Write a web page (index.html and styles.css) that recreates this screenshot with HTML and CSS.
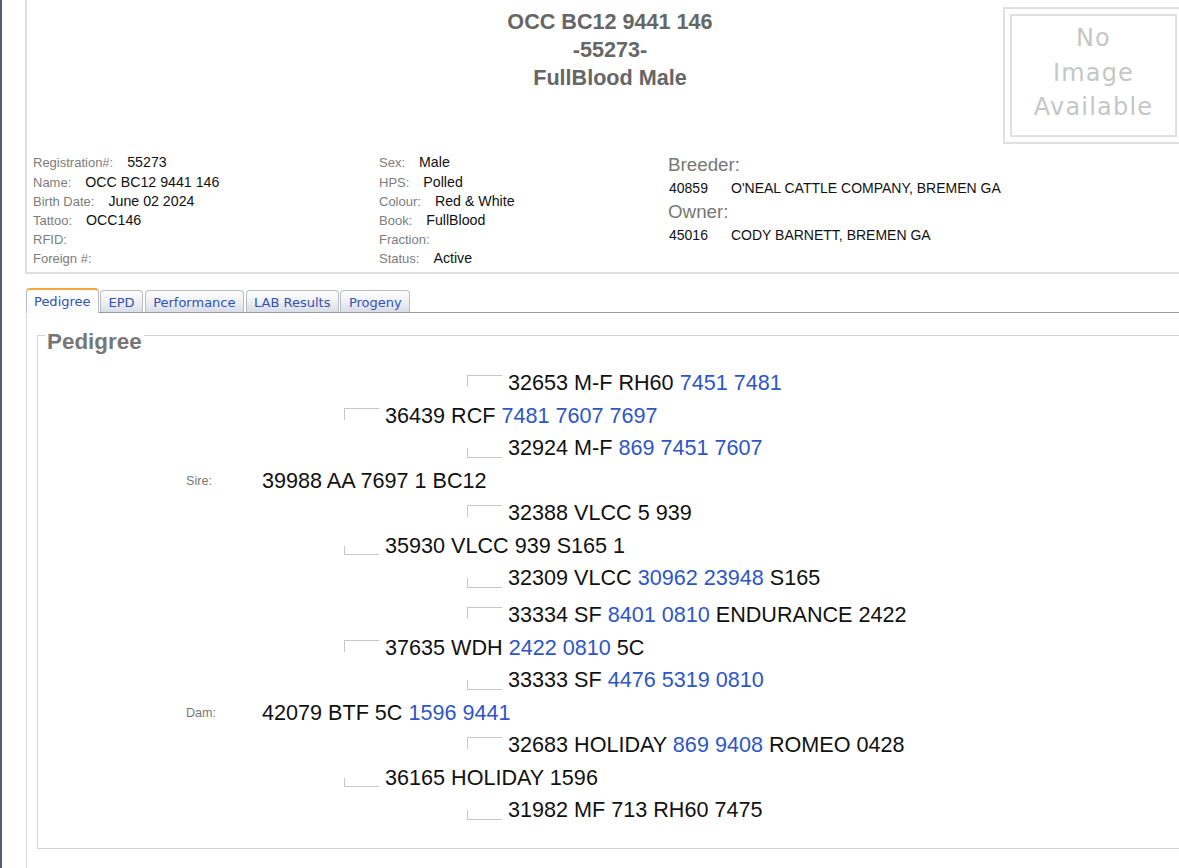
FILE: index.html
```html
<!DOCTYPE html>
<html lang="en">
<head>
<meta charset="utf-8">
<title>OCC BC12 9441 146</title>
<link rel="stylesheet" href="styles.css">
</head>
<body>
<div class="page">
  <section class="record">
    <div class="record-head">
      <div class="head-side"></div>
      <h1 class="title">OCC BC12 9441 146<br>-55273-<br>FullBlood Male</h1>
      <div class="photo"><div class="photo-inner">No<br>Image<br>Available</div></div>
    </div>
    <div class="details">
      <dl class="col">
        <div class="field"><dt>Registration#:</dt><dd>55273</dd></div>
        <div class="field"><dt>Name:</dt><dd>OCC BC12 9441 146</dd></div>
        <div class="field"><dt>Birth Date:</dt><dd>June 02 2024</dd></div>
        <div class="field"><dt>Tattoo:</dt><dd>OCC146</dd></div>
        <div class="field"><dt>RFID:</dt><dd></dd></div>
        <div class="field"><dt>Foreign #:</dt><dd></dd></div>
      </dl>
      <dl class="col">
        <div class="field"><dt>Sex:</dt><dd>Male</dd></div>
        <div class="field"><dt>HPS:</dt><dd>Polled</dd></div>
        <div class="field"><dt>Colour:</dt><dd>Red &amp; White</dd></div>
        <div class="field"><dt>Book:</dt><dd>FullBlood</dd></div>
        <div class="field"><dt>Fraction:</dt><dd></dd></div>
        <div class="field"><dt>Status:</dt><dd>Active</dd></div>
      </dl>
      <div class="col parties">
        <div class="party-head">Breeder:</div>
        <div class="party"><span class="party-id">40859</span><span>O'NEAL CATTLE COMPANY, BREMEN GA</span></div>
        <div class="party-head">Owner:</div>
        <div class="party"><span class="party-id">45016</span><span>CODY BARNETT, BREMEN GA</span></div>
      </div>
    </div>
  </section>

  <nav class="tabs">
    <a class="tab active">Pedigree</a>
    <a class="tab">EPD</a>
    <a class="tab">Performance</a>
    <a class="tab">LAB Results</a>
    <a class="tab">Progeny</a>
  </nav>

  <div class="panel">
    <fieldset class="pedigree">
      <legend>Pedigree</legend>
      <div class="tree">
        <div class="node g3"><span class="branch up"></span><span class="name">32653 M-F RH60 <a>7451</a> <a>7481</a></span></div>
        <div class="node g2"><span class="branch up"></span><span class="name">36439 RCF <a>7481</a> <a>7607</a> <a>7697</a></span></div>
        <div class="node g3"><span class="branch down"></span><span class="name">32924 M-F <a>869</a> <a>7451</a> <a>7607</a></span></div>
        <div class="node g1"><span class="role">Sire:</span><span class="name">39988 AA 7697 1 BC12</span></div>
        <div class="node g3"><span class="branch up"></span><span class="name">32388 VLCC 5 939</span></div>
        <div class="node g2"><span class="branch down"></span><span class="name">35930 VLCC 939 S165 1</span></div>
        <div class="node g3"><span class="branch down"></span><span class="name">32309 VLCC <a>30962</a> <a>23948</a> S165</span></div>

        <div class="node g3 dam-start"><span class="branch up"></span><span class="name">33334 SF <a>8401</a> <a>0810</a> ENDURANCE 2422</span></div>
        <div class="node g2"><span class="branch up"></span><span class="name">37635 WDH <a>2422</a> <a>0810</a> 5C</span></div>
        <div class="node g3"><span class="branch down"></span><span class="name">33333 SF <a>4476</a> <a>5319</a> <a>0810</a></span></div>
        <div class="node g1"><span class="role">Dam:</span><span class="name">42079 BTF 5C <a>1596</a> <a>9441</a></span></div>
        <div class="node g3"><span class="branch up"></span><span class="name">32683 HOLIDAY <a>869</a> <a>9408</a> ROMEO 0428</span></div>
        <div class="node g2"><span class="branch down"></span><span class="name">36165 HOLIDAY 1596</span></div>
        <div class="node g3"><span class="branch down"></span><span class="name">31982 MF 713 RH60 7475</span></div>
      </div>
    </fieldset>
  </div>
</div>
</body>
</html>
```

FILE: styles.css
```css
html, body {
  margin: 0;
  padding: 0;
  overflow-x: hidden;
  background: #fff;
}

body {
  font-family: "Liberation Sans", Arial, sans-serif;
  color: #111;
  border-left: 2px solid #535d78;
  min-height: 868px;
  box-sizing: border-box;
}

.page {
  padding-left: 23px;
}

/* ---------- record summary box ---------- */
.record {
  margin-right: -14px;
  border-left: 2px solid #dedede;
  border-bottom: 2px solid #dedede;
}

.record-head {
  display: grid;
  grid-template-columns: 1fr auto 1fr;
  align-items: start;
}

.title {
  margin: 0;
  padding-top: 8px;
  font-size: 21.6px;
  line-height: 28px;
  font-weight: bold;
  color: #666;
  text-align: center;
}

.photo {
  justify-self: end;
  margin: 7px 9px 0 0;
  width: 181px;
  height: 137px;
  box-sizing: border-box;
  border: 2px solid #e0e0e0;
  padding: 5px;
}

.photo-inner {
  height: 100%;
  box-sizing: border-box;
  border: 2px solid #e0e0e0;
  padding-top: 5px;
  font-family: "DejaVu Sans", Verdana, sans-serif;
  font-size: 24px;
  letter-spacing: 1.2px;
  line-height: 34.5px;
  color: #c6c6c6;
  text-align: center;
}

.details {
  display: grid;
  grid-template-columns: 346px 289px 1fr;
  padding: 9.4px 0 3.4px 6px;
}

.col {
  margin: 0;
}

.field {
  display: flex;
  align-items: baseline;
  height: 19.2px;
  line-height: 19.2px;
}

.field dt {
  font-size: 13px;
  color: #7c7c7c;
  margin-right: 14px;
}

.field dd {
  margin: 0;
  font-size: 14.2px;
  color: #111;
}

.party-head {
  font-size: 18.8px;
  line-height: 23.5px;
  color: #777;
}

.party {
  display: flex;
  font-size: 14px;
  line-height: 23.5px;
  padding-left: 1px;
}

.party-id {
  width: 62px;
}

/* ---------- tab strip ---------- */
.tabs {
  display: flex;
  align-items: flex-end;
  margin: 14px -20px 0 1px;
  border-bottom: 1px solid #9c9c9c;
  height: 24px;
}

.tab {
  font-family: "DejaVu Sans", Verdana, sans-serif;
  font-size: 13px;
  color: #2f52b4;
  height: 22px;
  line-height: 23px;
  padding: 0 7.5px;
  margin-left: 1.5px;
  box-sizing: border-box;
  border: 1px solid #b9bcc4;
  border-bottom: none;
  border-radius: 4px 4px 0 0;
  background: linear-gradient(#fefefe, #f1f2f6 45%, #d9dde9);
}

.tab.active {
  margin-left: 0;
  padding: 0 7px;
  height: 25px;
  margin-bottom: -1px;
  line-height: 24px;
  border-top: 2px solid #f2a93b;
  background: linear-gradient(#fff, #fbfbfb);
}

/* ---------- tab panel ---------- */
.panel {
  margin: 0 -20px 0 1px;
  border-left: 1px solid #dcdcdc;
  padding: 6px 0 20px 10px;
}

.pedigree {
  margin: 0;
  padding: 0;
  border: 1px solid #d2d2d2;
}

.pedigree legend {
  margin-left: 7px;
  padding: 13px 2px 0;
  font-size: 22.4px;
  line-height: 20px;
  font-weight: bold;
  color: #777;
}

.tree {
  margin-top: 15px;
  padding-bottom: 22px;
}

.node {
  display: flex;
  align-items: center;
  height: 32.5px;
  font-size: 21.6px;
  white-space: nowrap;
}

.node a {
  color: #2d56c6;
  text-decoration: none;
}

.node.g1 { padding-left: 148px; }
.node.g2 { padding-left: 306px; }
.node.g3 { padding-left: 429px; }

.node.dam-start {
  margin-top: 4.5px;
}

.role {
  width: 76px;
  font-size: 12.6px;
  color: #777;
}

/* tree connector lines */
.branch {
  align-self: flex-start;
  width: 35px;
  margin-right: 6px;
  box-sizing: border-box;
  border-left: 1px solid #c6c6c6;
}

.branch.up {
  margin-top: 8.25px;
  height: 12px;
  border-top: 1px solid #c6c6c6;
}

.branch.down {
  margin-top: 16.25px;
  height: 9.5px;
  border-bottom: 1px solid #c6c6c6;
}
```
